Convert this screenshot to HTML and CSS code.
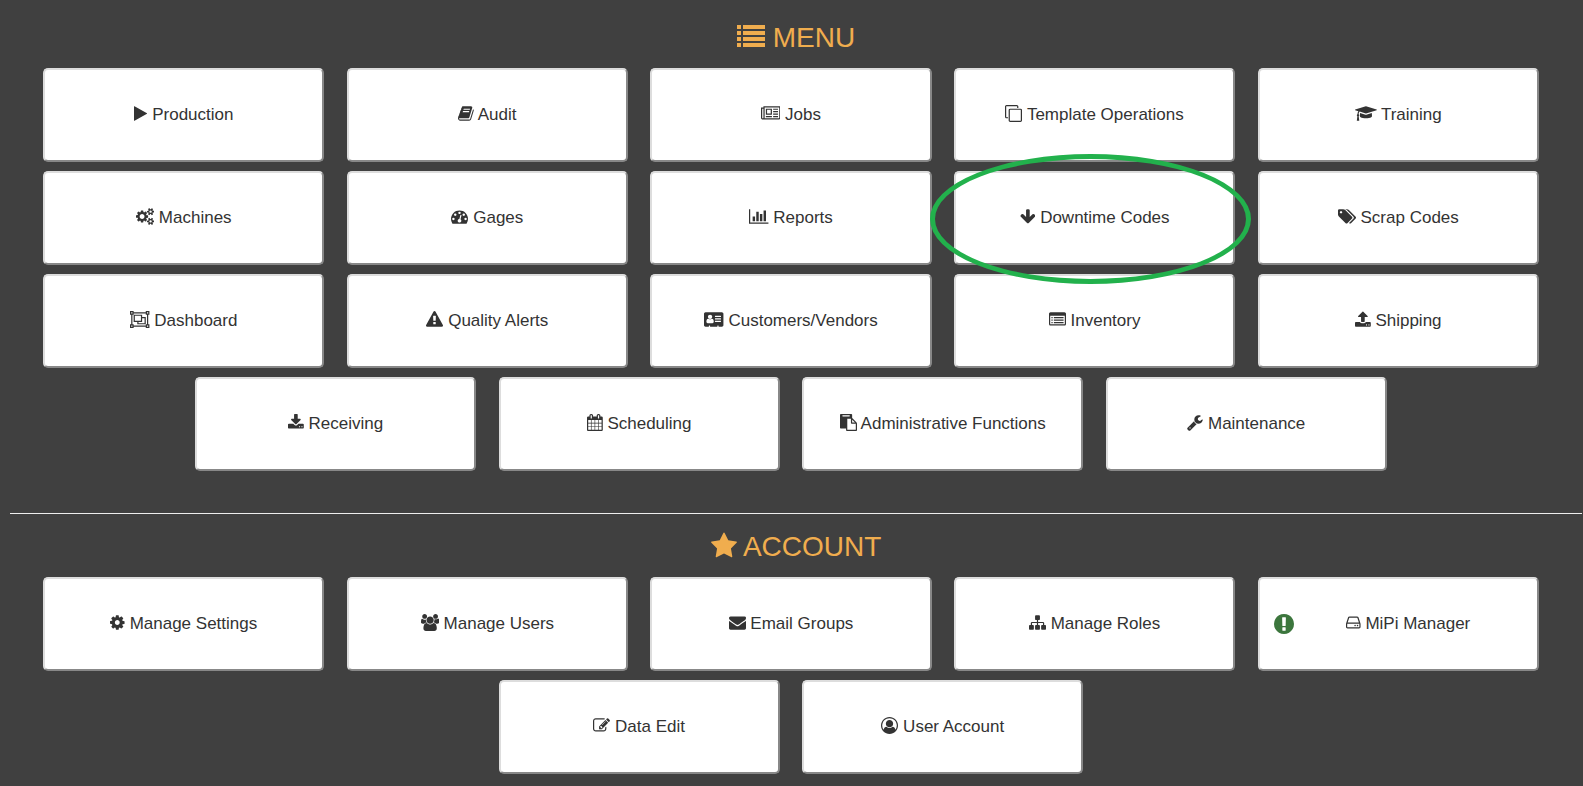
FILE: index.html
```html
<!doctype html>
<html lang="en">
<head>
  <meta charset="utf-8">
  <title>Menu</title>
  <link rel="stylesheet" href="styles.css">
</head>

<body>
  <div class="page">

    <h2 class="heading">
      <svg class="icon" viewBox="0 0 1792 1792"><path d="M0 128h256v256h-256zM384 128h1408v256h-1408zM0 512h256v256h-256zM384 512h1408v256h-1408zM0 896h256v256h-256zM384 896h1408v256h-1408zM0 1280h256v256h-256zM384 1280h1408v256h-1408z"/></svg>
      MENU
    </h2>

    <div class="tiles">
      <button class="tile">
        <svg class="icon" viewBox="192 0 1408 1792"><path d="M1576 927l-1328 738q-23 13-39.5 3t-16.5-36v-1472q0-26 16.5-36t39.5 3l1328 738q23 13 23 33t-23 33z"/></svg>
        Production
      </button>
      <button class="tile">
        <svg class="icon" viewBox="64 0 1664 1792"><path d="M1703 478q40 57 18 129l-275 906q-19 64-76.5 107.5t-122.5 43.5h-923q-77 0-148.5-53.5t-99.5-131.5q-24-67-2-127 0-4 3-27t4-37q1-8-3-21.5t-3-19.5q2-11 8-21t16.5-23.5 16.5-23.5q23-38 45-91.5t30-91.5q3-10 .5-30t-.5-28q3-11 17-28t17-23q21-36 42-92t25-90q1-9-2.5-32t.5-28q4-13 22-30.5t22-22.5q19-26 42.5-84.5t27.5-96.5q1-8-3-25.5t-2-26.5q2-8 9-18t18-23 17-21q8-12 16.5-30.5t15-35 16-36 19.5-32 26.5-23.5 36-11.5 47.5 5.5l-1 3q38-9 51-9h761q74 0 114 56t18 130l-274 906q-36 119-71.5 153.5t-128.5 34.5h-869q-27 0-38 15-11 16-1 43 24 70 144 70h923q29 0 56-15.5t35-41.5l300-987q7-22 5-57 38 15 59 43zm-1064 2q-4 13 2 22.5t20 9.5h608q13 0 25.5-9.5t16.5-22.5l21-64q4-13-2-22.5t-20-9.5h-608q-13 0-25.5 9.5t-16.5 22.5zm-83 256q-4 13 2 22.5t20 9.5h608q13 0 25.5-9.5t16.5-22.5l21-64q4-13-2-22.5t-20-9.5h-608q-13 0-25.5 9.5t-16.5 22.5z"/></svg>
        Audit
      </button>
      <button class="tile">
        <svg class="icon" viewBox="0 0 2048 1792"><path d="M1024 512h-384v384h384v-384zm128 640v128h-640v-128h640zm0-768v640h-640v-640h640zm640 768v128h-512v-128h512zm0-256v128h-512v-128h512zm0-256v128h-512v-128h512zm0-256v128h-512v-128h512zm-1536 960v-960h-128v960q0 26 19 45t45 19 45-19 19-45zm1664 0v-1088h-1536v1088q0 33-11 64h1483q26 0 45-19t19-45zm128-1216v1216q0 80-56 136t-136 56h-1664q-80 0-136-56t-56-136v-1088h256v-128h1792z"/></svg>
        Jobs
      </button>
      <button class="tile">
        <svg class="icon" viewBox="0 0 1792 1792"><path d="M1664 1632v-1088q0-13-9.5-22.5t-22.5-9.5h-1088q-13 0-22.5 9.5t-9.5 22.5v1088q0 13 9.5 22.5t22.5 9.5h1088q13 0 22.5-9.5t9.5-22.5zm128-1088v1088q0 66-47 113t-113 47h-1088q-66 0-113-47t-47-113v-1088q0-66 47-113t113-47h1088q66 0 113 47t47 113zm-384-384v160h-128v-160q0-13-9.5-22.5t-22.5-9.5h-1088q-13 0-22.5 9.5t-9.5 22.5v1088q0 13 9.5 22.5t22.5 9.5h160v128h-160q-66 0-113-47t-47-113v-1088q0-66 47-113t113-47h1088q66 0 113 47t47 113z"/></svg>
        Template Operations
      </button>
      <button class="tile">
        <svg class="icon" viewBox="0 0 2304 1792"><path d="M1774 836l18 316q4 69-82 128t-235 93.5-323 34.5-323-34.5-235-93.5-82-128l18-316 574 181q22 7 48 7t48-7zm530-324q0 23-22 31l-1120 352q-4 1-10 1t-10-1l-652-206q-43 34-71 111.5t-34 178.5q63 36 63 109 0 69-58 107l58 433q2 14-8 25-9 11-24 11h-192q-15 0-24-11-10-11-8-25l58-433q-58-38-58-107 0-73 65-111 11-207 98-330l-333-104q-22-8-22-31t22-31l1120-352q4-1 10-1t10 1l1120 352q22 8 22 31z"/></svg>
        Training
      </button>
      <button class="tile">
        <svg class="icon" viewBox="-64 0 1920 1792"><path d="M832 896q0-106-75-181t-181-75-181 75-75 181 75 181 181 75 181-75 75-181zm768 512q0-52-38-90t-90-38-90 38-38 90q0 53 37.5 90.5t90.5 37.5 90.5-37.5 37.5-90.5zm0-1024q0-52-38-90t-90-38-90 38-38 90q0 53 37.5 90.5t90.5 37.5 90.5-37.5 37.5-90.5zm-384 421v185q0 10-7 19.5t-16 10.5l-155 24q-11 35-32 76 34 48 90 115 7 11 7 20 0 12-7 19-23 30-82.5 89.5t-78.5 59.5q-11 0-21-7l-115-90q-37 19-77 31-11 108-23 155-7 24-30 24h-186q-11 0-20-7.5t-10-17.5l-23-153q-34-10-75-31l-118 89q-7 7-20 7-11 0-21-8-144-133-144-160 0-9 7-19 10-14 41-53t47-61q-23-44-35-82l-152-24q-10-1-17-9.5t-7-19.5v-185q0-10 7-19.5t16-10.5l155-24q11-35 32-76-34-48-90-115-7-11-7-20 0-12 7-20 22-30 82-89t79-59q11 0 21 7l115 90q34-18 77-32 11-108 23-154 7-24 30-24h186q11 0 20 7.5t10 17.5l23 153q34 10 75 31l118-89q8-7 20-7 11 0 21 8 144 133 144 160 0 8-7 19-12 16-42 54t-45 60q23 48 34 82l152 23q10 2 17 10.5t7 19.5zm640 533v140q0 16-149 31-12 27-30 52 51 113 51 138 0 4-4 7-122 71-124 71-8 0-46-47t-52-68q-20 2-30 2t-30-2q-14 21-52 68t-46 47q-2 0-124-71-4-3-4-7 0-25 51-138-18-25-30-52-149-15-149-31v-140q0-16 149-31 13-29 30-52-51-113-51-138 0-4 4-7 4-2 35-20t59-34 30-16q8 0 46 46.5t52 67.5q20-2 30-2t30 2q51-71 92-112l6-2q4 0 124 70 4 3 4 7 0 25-51 138 17 23 30 52 149 15 149 31zm0-1024v140q0 16-149 31-12 27-30 52 51 113 51 138 0 4-4 7-122 71-124 71-8 0-46-47t-52-68q-20 2-30 2t-30-2q-14 21-52 68t-46 47q-2 0-124-71-4-3-4-7 0-25 51-138-18-25-30-52-149-15-149-31v-140q0-16 149-31 13-29 30-52-51-113-51-138 0-4 4-7 4-2 35-20t59-34 30-16q8 0 46 46.5t52 67.5q20-2 30-2t30 2q51-71 92-112l6-2q4 0 124 70 4 3 4 7 0 25-51 138 17 23 30 52 149 15 149 31z"/></svg>
        Machines
      </button>
      <button class="tile">
        <svg class="icon" viewBox="0 0 1792 1792"><path d="M384 1152q0-53-37.5-90.5t-90.5-37.5-90.5 37.5-37.5 90.5 37.5 90.5 90.5 37.5 90.5-37.5 37.5-90.5zm192-448q0-53-37.5-90.5t-90.5-37.5-90.5 37.5-37.5 90.5 37.5 90.5 90.5 37.5 90.5-37.5 37.5-90.5zm428 481l101-382q6-26-7.5-48.5t-38.5-29.5-48 6.5-30 39.5l-101 382q-60 5-107 43.5t-63 98.5q-20 77 20 146t117 89 146-20 89-117q16-60-6-117t-72-91zm660-33q0-53-37.5-90.5t-90.5-37.5-90.5 37.5-37.5 90.5 37.5 90.5 90.5 37.5 90.5-37.5 37.5-90.5zm-640-640q0-53-37.5-90.5t-90.5-37.5-90.5 37.5-37.5 90.5 37.5 90.5 90.5 37.5 90.5-37.5 37.5-90.5zm448 192q0-53-37.5-90.5t-90.5-37.5-90.5 37.5-37.5 90.5 37.5 90.5 90.5 37.5 90.5-37.5 37.5-90.5zm320 448q0 261-141 483-19 29-54 29h-1402q-35 0-54-29-141-221-141-483 0-182 71-348t191-286 286-191 348-71 348 71 286 191 191 286 71 348z"/></svg>
        Gages
      </button>
      <button class="tile">
        <svg class="icon" viewBox="0 0 2048 1792"><path d="M640 896v512h-256v-512h256zm384-512v1024h-256v-1024h256zm1024 1152v128h-2048v-1536h128v1408h1920zm-640-896v768h-256v-768h256zm384-384v1152h-256v-1152h256z"/></svg>
        Reports
      </button>
      <button class="tile">
        <svg class="icon" viewBox="64 0 1664 1792"><path d="M1675 832q0 53-37 90l-651 652q-39 37-91 37-53 0-90-37l-651-652q-38-36-38-90 0-53 38-91l74-75q39-37 91-37 53 0 90 37l294 294v-704q0-52 38-90t90-38h128q52 0 90 38t38 90v704l294-294q37-37 90-37 52 0 91 37l75 75q37 39 37 91z"/></svg>
        Downtime Codes
        <span class="circle"></span>
      </button>
      <button class="tile">
        <svg class="icon" viewBox="-64 0 1920 1792"><path d="M384 448q0-53-37.5-90.5t-90.5-37.5-90.5 37.5-37.5 90.5 37.5 90.5 90.5 37.5 90.5-37.5 37.5-90.5zm1067 576q0 53-37 90l-491 492q-39 37-91 37-53 0-90-37l-715-716q-38-37-64.5-101t-26.5-117v-416q0-52 38-90t90-38h416q53 0 117 26.5t102 64.5l715 714q37 39 37 91zm384 0q0 53-37 90l-491 492q-39 37-91 37-36 0-59-14t-53-45l470-470q37-37 37-90 0-52-37-91l-715-714q-38-38-102-64.5t-117-26.5h224q53 0 117 26.5t102 64.5l715 714q37 39 37 91z"/></svg>
        Scrap Codes
      </button>
      <button class="tile">
        <svg class="icon" viewBox="0 0 2048 1792"><path fill-rule="evenodd" d="M2048 384h-128v1024h128v384h-384v-128h-1280v128h-384v-384h128v-1024h-128v-384h384v128h1280v-128h384zM384 256v128h-128v1024h128v128h1280v-128h128v-1024h-128v-128zM128 128v128h128v-128zM1792 128v128h128v-128zM128 1536v128h128v-128zM1792 1536v128h128v-128zM1280 640h384v768h-896v-256h-384v-768h896zM512 512v512h640v-512zM1280 768v384h-384v128h640v-512z"/></svg>
        Dashboard
      </button>
      <button class="tile">
        <svg class="icon" viewBox="0 0 1792 1792"><path d="M1024 1375v-190q0-14-9.5-23.5t-22.5-9.5h-192q-13 0-22.5 9.5t-9.5 23.5v190q0 14 9.5 23.5t22.5 9.5h192q13 0 22.5-9.5t9.5-23.5zm-2-374l18-459q0-12-10-19-13-11-24-11h-220q-11 0-24 11-10 7-10 21l17 457q0 10 10 16.5t24 6.5h185q14 0 23.5-6.5t10.5-16.5zm-14-934l768 1408q35 63-2 126-17 29-46.5 46t-63.5 17h-1536q-34 0-63.5-17t-46.5-46q-37-63-2-126l768-1408q17-31 47-49t65-18 65 18 47 49z"/></svg>
        Quality Alerts
      </button>
      <button class="tile">
        <svg class="icon" viewBox="0 0 2048 1792"><path d="M1024 1131q0-64-9-117.5t-29.5-103-60.5-78-97-28.5q-6 4-30 18t-37.5 21.5-35.5 17.5-43 14.5-42 4.5-42-4.5-43-14.5-35.5-17.5-37.5-21.5-30-18q-57 0-97 28.5t-60.5 78-29.5 103-9 117.5 37 106.5 91 42.5h512q54 0 91-42.5t37-106.5zm-157-520q0-94-66.5-160.5t-160.5-66.5-160.5 66.5-66.5 160.5 66.5 160.5 160.5 66.5 160.5-66.5 66.5-160.5zm925 509v-64q0-14-9-23t-23-9h-576q-14 0-23 9t-9 23v64q0 14 9 23t23 9h576q14 0 23-9t9-23zm0-260v-56q0-15-10.5-25.5t-25.5-10.5h-568q-15 0-25.5 10.5t-10.5 25.5v56q0 15 10.5 25.5t25.5 10.5h568q15 0 25.5-10.5t10.5-25.5zm0-252v-64q0-14-9-23t-23-9h-576q-14 0-23 9t-9 23v64q0 14 9 23t23 9h576q14 0 23-9t9-23zm256-320v1216q0 66-47 113t-113 47h-352v-96q0-14-9-23t-23-9h-64q-14 0-23 9t-9 23v96h-768v-96q0-14-9-23t-23-9h-64q-14 0-23 9t-9 23v96h-352q-66 0-113-47t-47-113v-1216q0-66 47-113t113-47h1728q66 0 113 47t47 113z"/></svg>
        Customers/Vendors
      </button>
      <button class="tile">
        <svg class="icon" viewBox="0 0 1792 1792"><path fill-rule="evenodd" d="M160 128h1472q66 0 113 47t47 113v1088q0 66-47 113t-113 47h-1472q-66 0-113-47t-47-113v-1088q0-66 47-113t113-47zM128 512v864q0 13 9.500 22.500t22.500 9.500h1472q13 0 22.500-9.500t9.500-22.500v-864zM256 640h128v128h-128zM512 640h1024v128h-1024zM256 896h128v128h-128zM512 896h1024v128h-1024zM256 1152h128v128h-128zM512 1152h1024v128h-1024z"/></svg>
        Inventory
      </button>
      <button class="tile">
        <svg class="icon" viewBox="64 0 1664 1792"><path d="M1344 1472q0-26-19-45t-45-19-45 19-19 45 19 45 45 19 45-19 19-45zm256 0q0-26-19-45t-45-19-45 19-19 45 19 45 45 19 45-19 19-45zm128-224v320q0 40-28 68t-68 28h-1472q-40 0-68-28t-28-68v-320q0-40 28-68t68-28h427q21 56 70.5 92t110.5 36h256q61 0 110.5-36t70.5-92h427q40 0 68 28t28 68zm-325-648q-17 40-59 40h-256v448q0 26-19 45t-45 19h-256q-26 0-45-19t-19-45v-448h-256q-42 0-59-40-17-39 14-69l448-448q18-19 45-19t45 19l448 448q31 30 14 69z"/></svg>
        Shipping
      </button>
      <button class="tile">
        <svg class="icon" viewBox="64 0 1664 1792"><path d="M1344 1344q0-26-19-45t-45-19-45 19-19 45 19 45 45 19 45-19 19-45zm256 0q0-26-19-45t-45-19-45 19-19 45 19 45 45 19 45-19 19-45zm128-224v320q0 40-28 68t-68 28h-1472q-40 0-68-28t-28-68v-320q0-40 28-68t68-28h465l135 136q58 56 136 56t136-56l136-136h464q40 0 68 28t28 68zm-325-569q17 41-14 70l-448 448q-18 19-45 19t-45-19l-448-448q-31-29-14-70 17-39 59-39h256v-448q0-26 19-45t45-19h256q26 0 45 19t19 45v448h256q42 0 59 39z"/></svg>
        Receiving
      </button>
      <button class="tile">
        <svg class="icon" viewBox="64 0 1664 1792"><path d="M192 1664h288v-288h-288v288zm352 0h320v-288h-320v288zm-352-352h288v-320h-288v320zm352 0h320v-320h-320v320zm-352-384h288v-288h-288v288zm736 736h320v-288h-320v288zm-384-736h320v-288h-320v288zm768 736h288v-288h-288v288zm-384-352h320v-320h-320v320zm-352-864v-288q0-13-9.500-22.500t-22.500-9.500h-64q-13 0-22.500 9.500t-9.500 22.500v288q0 13 9.500 22.500t22.500 9.500h64q13 0 22.500-9.500t9.500-22.500zm736 864h288v-320h-288v320zm-384-384h320v-288h-320v288zm384 0h288v-288h-288v288zm32-480v-288q0-13-9.500-22.500t-22.500-9.500h-64q-13 0-22.500 9.500t-9.500 22.500v288q0 13 9.500 22.500t22.500 9.500h64q13 0 22.500-9.500t9.500-22.500zm384-64v1280q0 52-38 90t-90 38h-1408q-52 0-90-38t-38-90v-1280q0-52 38-90t90-38h128v-96q0-66 47-113t113-47h64q66 0 113 47t47 113v96h384v-96q0-66 47-113t113-47h64q66 0 113 47t47 113v96h128q52 0 90 38t38 90z"/></svg>
        Scheduling
      </button>
      <button class="tile">
        <svg class="icon" viewBox="0 0 1792 1792"><path d="M768 1664h896v-640h-416q-40 0-68-28t-28-68v-416h-384v1152zm256-1440v-64q0-13-9.500-22.500t-22.500-9.500h-704q-13 0-22.500 9.500t-9.500 22.500v64q0 13 9.500 22.500t22.500 9.500h704q13 0 22.500-9.500t9.500-22.500zm256 672h299l-299-299v299zm512 128v672q0 40-28 68t-68 28h-960q-40 0-68-28t-28-68v-160h-544q-40 0-68-28t-28-68v-1344q0-40 28-68t68-28h1088q40 0 68 28t28 68v328q21 13 36 28l408 408q28 28 48 76t20 88z"/></svg>
        Administrative Functions
      </button>
      <button class="tile">
        <svg class="icon" viewBox="64 0 1664 1792"><path d="M448 1472q0-26-19-45t-45-19-45 19-19 45 19 45 45 19 45-19 19-45zm644-420l-682 682q-37 37-90 37-52 0-91-37l-106-108q-38-36-38-90 0-53 38-91l681-681q39 98 114.500 173.500t173.500 114.500zm634-435q0 39-23 106-47 134-164.500 217.500t-258.500 83.500q-185 0-316.500-131.500t-131.500-316.500 131.500-316.500 316.500-131.500q58 0 121.500 16.500t107.500 46.500q16 11 16 28t-16 28l-293 169v224l193 107q5-3 79-48.500t135.500-81 70.500-35.500q15 0 23.500 10t8.500 25z"/></svg>
        Maintenance
      </button>
    </div>

    <hr class="divider">

    <h2 class="heading">
      <svg class="icon" viewBox="64 0 1664 1792"><path d="M1728 647q0 22-26 48l-363 354 86 500q1 7 1 20 0 21-10.500 35.500t-30.500 14.500q-19 0-40-12l-449-236-449 236q-22 12-40 12-21 0-31.500-14.500t-10.500-35.500q0-6 2-20l86-500-364-354q-25-27-25-48 0-37 56-46l502-73 225-455q19-41 49-41t49 41l225 455 502 73q56 9 56 46z"/></svg>
      ACCOUNT
    </h2>

    <div class="tiles">
      <button class="tile">
        <svg class="icon" viewBox="128 0 1536 1792"><path d="M1152 896q0-106-75-181t-181-75-181 75-75 181 75 181 181 75 181-75 75-181zm512-109v222q0 12-8 23t-20 13l-185 28q-19 54-39 91 35 50 107 138 10 12 10 25t-9 23q-27 37-99 108t-94 71q-12 0-26-9l-138-108q-44 23-91 38-16 136-29 186-7 28-36 28h-222q-14 0-24.500-8.500t-11.500-21.500l-28-184q-49-16-90-37l-141 107q-10 9-25 9-14 0-25-11-126-114-165-168-7-10-7-23 0-12 8-23 15-21 51-66.500t54-70.500q-27-50-41-99l-183-27q-13-2-21-12.500t-8-23.500v-222q0-12 8-23t19-13l186-28q14-46 39-92-40-57-107-138-10-12-10-24 0-10 9-23 26-36 98.500-107.500t94.500-71.500q13 0 26 10l138 107q44-23 91-38 16-136 29-186 7-28 36-28h222q14 0 24.500 8.500t11.500 21.500l28 184q49 16 90 37l142-107q9-9 24-9 13 0 25 10 129 119 165 170 7 8 7 22 0 12-8 23-15 21-51 66.500t-54 70.500q26 50 41 98l183 28q13 2 21 12.500t8 23.500z"/></svg>
        Manage Settings
      </button>
      <button class="tile">
        <svg class="icon" viewBox="-64 0 1920 1792"><path d="M529 896q-162 5-265 128h-134q-82 0-138-40.500t-56-118.500q0-353 124-353 6 0 43.500 21t97.500 42.500 119 21.500q67 0 133-23-5 37-5 66 0 159 93 287zm1071 637q0 120-73 189.500t-194 69.500h-874q-121 0-194-69.500t-73-189.500q0-53 3.500-103.500t14-109 26.500-108.500 43-97.500 62-81 85.500-53.500 111.500-20q10 0 43 21.500t73 48 107 48 135 21.500 135-21.500 107-48 73-48 43-21.500q61 0 111.500 20t85.500 53.500 62 81 43 97.500 26.500 108.500 14 109 3.500 103.500zm-1024-1277q0 106-75 181t-181 75-181-75-75-181 75-181 181-75 181 75 75 181zm704 384q0 159-112.500 271.500t-271.500 112.500-271.500-112.500-112.500-271.500 112.500-271.500 271.500-112.500 271.500 112.500 112.500 271.500zm576 225q0 78-56 118.500t-138 40.500h-134q-103-123-265-128 93-128 93-287 0-29-5-66 66 23 133 23 59 0 119-21.500t97.500-42.500 43.500-21q124 0 124 353zm-128-609q0 106-75 181t-181 75-181-75-75-181 75-181 181-75 181 75 75 181z"/></svg>
        Manage Users
      </button>
      <button class="tile">
        <svg class="icon" viewBox="0 0 1792 1792"><path d="M1792 710v794q0 66-47 113t-113 47h-1472q-66 0-113-47t-47-113v-794q44 49 101 87 362 246 497 345 57 42 92.500 65.500t94.500 48 110 24.500h2q51 0 110-24.500t94.500-48 92.500-65.500q170-123 498-345 57-39 100-87zm0-294q0 79-49 151t-122 123q-376 261-468 325-10 7-42.500 31t-54 38.500-52 32.500-57.500 27-50 9h-2q-23 0-50-9t-57.500-27-52-32.500-54-38.500-42.500-31q-91-64-262-182.500t-205-142.500q-62-42-117-115.500t-55-136.500q0-78 41.500-130t118.500-52h1472q65 0 112.500 47t47.500 113z"/></svg>
        Email Groups
      </button>
      <button class="tile">
        <svg class="icon" viewBox="0 0 1792 1792"><path d="M1792 1248v320q0 40-28 68t-68 28h-320q-40 0-68-28t-28-68v-320q0-40 28-68t68-28h96v-192h-512v192h96q40 0 68 28t28 68v320q0 40-28 68t-68 28h-320q-40 0-68-28t-28-68v-320q0-40 28-68t68-28h96v-192h-512v192h96q40 0 68 28t28 68v320q0 40-28 68t-68 28h-320q-40 0-68-28t-28-68v-320q0-40 28-68t68-28h96v-192q0-52 38-90t90-38h512v-192h-96q-40 0-68-28t-28-68v-320q0-40 28-68t68-28h320q40 0 68 28t28 68v320q0 40-28 68t-68 28h-96v192h512q52 0 90 38t38 90v192h96q40 0 68 28t28 68z"/></svg>
        Manage Roles
      </button>
      <button class="tile">
        <svg class="status" viewBox="128 128 1536 1536"><path d="M896 128q209 0 385.500 103t279.500 279.500 103 385.500-103 385.500-279.500 279.500-385.500 103-385.500-103-279.500-279.500-103-385.500 103-385.500 279.500-279.500 385.500-103zm128 1247v-190q0-14-9-23.500t-22-9.500h-192q-13 0-23 10t-10 23v190q0 13 10 23t23 10h192q13 0 22-9.500t9-23.500zm-2-344l18-621q0-12-10-18-10-8-24-8h-220q-14 0-24 8-10 6-10 18l17 621q0 10 10 17.500t24 7.500h185q14 0 23.500-7.500t10.500-17.500z"/></svg>
        <svg class="icon" viewBox="128 0 1536 1792"><path d="M1168 1216q0 33-23.500 56.500t-56.500 23.500-56.500-23.500-23.500-56.500 23.500-56.500 56.500-23.500 56.500 23.500 23.500 56.500zm256 0q0 33-23.500 56.500t-56.500 23.500-56.500-23.500-23.500-56.500 23.500-56.500 56.500-23.500 56.500 23.500 23.500 56.500zm112 160v-320q0-13-9.500-22.500t-22.500-9.500h-1216q-13 0-22.500 9.500t-9.500 22.500v320q0 13 9.500 22.500t22.500 9.500h1216q13 0 22.500-9.500t9.500-22.500zm-1230-480h1180l-157-482q-4-13-16-21.500t-26-8.500h-782q-14 0-26 8.500t-16 21.500zm1358 160v320q0 66-47 113t-113 47h-1216q-66 0-113-47t-47-113v-320q0-25 16-75l197-606q17-53 63-86t101-33h782q55 0 101 33t63 86l197 606q16 50 16 75z"/></svg>
        MiPi Manager
      </button>
      <button class="tile">
        <svg class="icon" viewBox="0 0 1792 1792"><path d="M888 1184l116-116-152-152-116 116v56h96v96h56zm440-720q-16-16-33 1l-350 350q-17 17-1 33t33-1l350-350q17-17 1-33zm80 594v190q0 119-84.500 203.500t-203.500 84.500h-832q-119 0-203.500-84.500t-84.500-203.500v-832q0-119 84.500-203.500t203.500-84.500h832q63 0 117 25 15 7 18 23 3 17-9 29l-49 49q-14 14-32 8-23-6-45-6h-832q-66 0-113 47t-47 113v832q0 66 47 113t113 47h832q66 0 113-47t47-113v-126q0-13 9-22l64-64q15-15 35-7t20 29zm-96-738l288 288-672 672h-288v-288zm444 132l-92 92-288-288 92-92q28-28 68-28t68 28l152 152q28 28 28 68t-28 68z"/></svg>
        Data Edit
      </button>
      <button class="tile">
        <svg class="icon" viewBox="0 0 1792 1792"><path d="M896 0q182 0 348 71t286 191 191 286 71 348q0 181-70.500 347t-190.500 286-286 191.500-349 71.500-349-71-285.500-191.500-190.500-286-71-347.500 71-348 191-286 286-191 348-71zm619 1351q149-205 149-455 0-156-61-298t-164-245-245-164-298-61-298 61-245 164-164 245-61 298q0 250 149 455 66-327 306-327 131 128 313 128t313-128q240 0 306 327zm-235-647q0-159-112.500-271.500t-271.500-112.500-271.500 112.500-112.500 271.500 112.500 271.500 271.500 112.500 271.500-112.500 112.500-271.500z"/></svg>
        User Account
      </button>
    </div>

  </div>
</body>

</html>
```

FILE: styles.css
```css
body{
  margin: 0;
  background: #404040;
  color: #333;
  font-family: "Liberation Sans", Arial, sans-serif;
  font-size: 16px;
}
.page{
  padding: 22px 1px 0 10px;
}
.heading{
  margin: 0 0 14px;
  color: #f0ad4e;
  font-size: 28px;
  font-weight: normal;
  line-height: 32px;
  text-align: center;
}
.icon{
  height: 17px;
  fill: currentColor;
  vertical-align: -2px;
}
.heading .icon{
  height: 28px;
  vertical-align: -4px;
}
.tiles{
  padding-right: 10px;
  text-align: center;
}
.tile{
  position: relative;
  width: 18%;
  margin: 0 9px 9px;
  padding: 33px 14px;
  border: 2px solid;
  border-color: #ddd #888 #888 #ddd;
  border-radius: 5px;
  background: #fff;
  color: #333;
  font-family: inherit;
  font-size: 17px;
  line-height: 24px;
  vertical-align: top;
  cursor: pointer;
}
.tile:hover{
  background: #eee;
}
.status{
  float: left;
  width: 20px;
  height: 20px;
  margin-top: 2px;
  fill: #3c763d;
}
/* ring drawn round the tile, over its neighbours */
.circle{
  position: absolute;
  z-index: 1;
  top: -19px;
  right: -18px;
  bottom: -21px;
  left: -26px;
  border: 5px solid #22b14c;
  border-radius: 50%;
  pointer-events: none;
}
.divider{
  height: 1px;
  margin: 33px 0 17px;
  border: 0;
  background: #eee;
}
```
